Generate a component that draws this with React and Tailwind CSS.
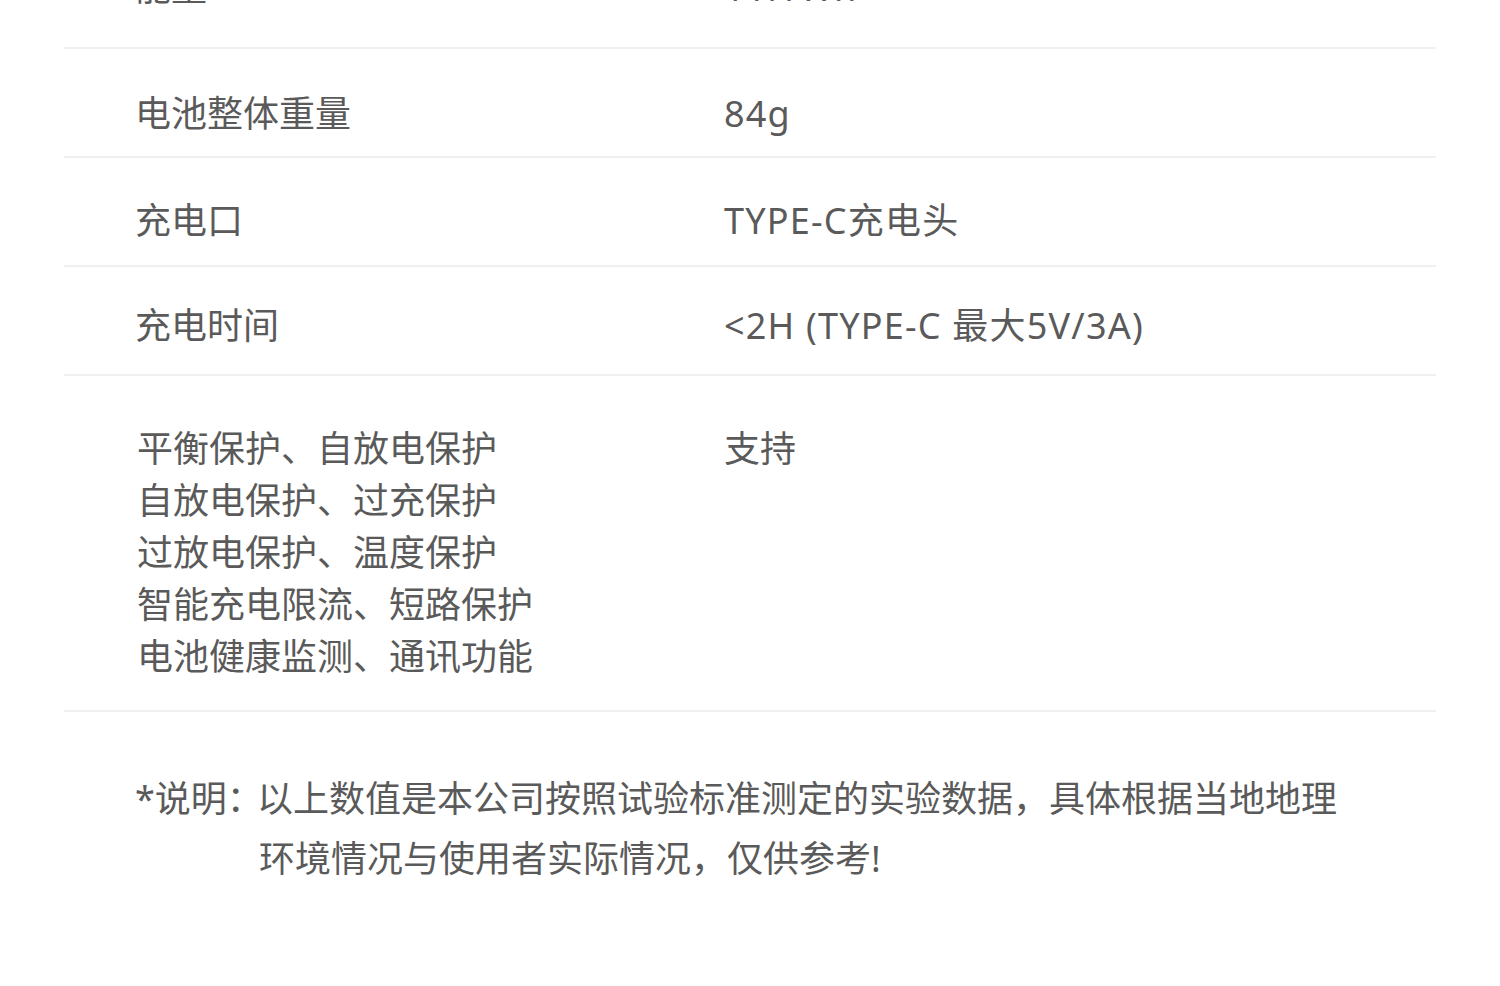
export default function App() {
  const font = { fontFamily: '"Noto Sans", "Noto Sans CJK SC", sans-serif' };
  const rows = [
    { k: "电池整体重量", v: "84g", pt: "pt-[47px]" },
    { k: "充电口", v: "TYPE-C充电头", pt: "pt-[45px]" },
    { k: "充电时间", v: "<2H (TYPE-C 最大5V/3A)", pt: "pt-[41px]" },
  ];
  const prot = [
    "平衡保护、自放电保护",
    "自放电保护、过充保护",
    "过放电保护、温度保护",
    "智能充电限流、短路保护",
    "电池健康监测、通讯功能",
  ];
  return (
    <div
      className="w-[1500px] h-[986px] overflow-hidden bg-white text-[#5a5a5a] text-[36px]"
      style={font}
    >
      <div className="px-[64px]">
        <div className="grid grid-cols-[660px_1fr] mt-[-73px] h-[122px] pt-[43px] leading-[36px] border-b-2 border-[#f0f0f0]">
          <div className="pl-[71px]">能量</div>
          <div className="tracking-[1px]">11.1Wh</div>
        </div>
        {rows.map((r) => (
          <div
            key={r.k}
            className={`grid grid-cols-[660px_1fr] h-[109px] ${r.pt} leading-[36px] border-b-2 border-[#f0f0f0]`}
          >
            <div className="pl-[71px]">{r.k}</div>
            <div className="tracking-[1.2px]">{r.v}</div>
          </div>
        ))}
        <div className="grid grid-cols-[660px_1fr] pt-[47px] pb-[27px] leading-[52px] border-b-2 border-[#f0f0f0]">
          <div className="pl-[73px]">
            {prot.map((p) => (
              <div key={p}>{p}</div>
            ))}
          </div>
          <div>支持</div>
        </div>
        <div className="flex pl-[71px] mt-[57px] leading-[60px]">
          <div className="w-[122px] shrink-0 whitespace-nowrap">*说明：</div>
          <div className="whitespace-nowrap">
            <div>以上数值是本公司按照试验标准测定的实验数据，具体根据当地地理</div>
            <div className="pl-[2px]">环境情况与使用者实际情况，仅供参考!</div>
          </div>
        </div>
      </div>
    </div>
  );
}
